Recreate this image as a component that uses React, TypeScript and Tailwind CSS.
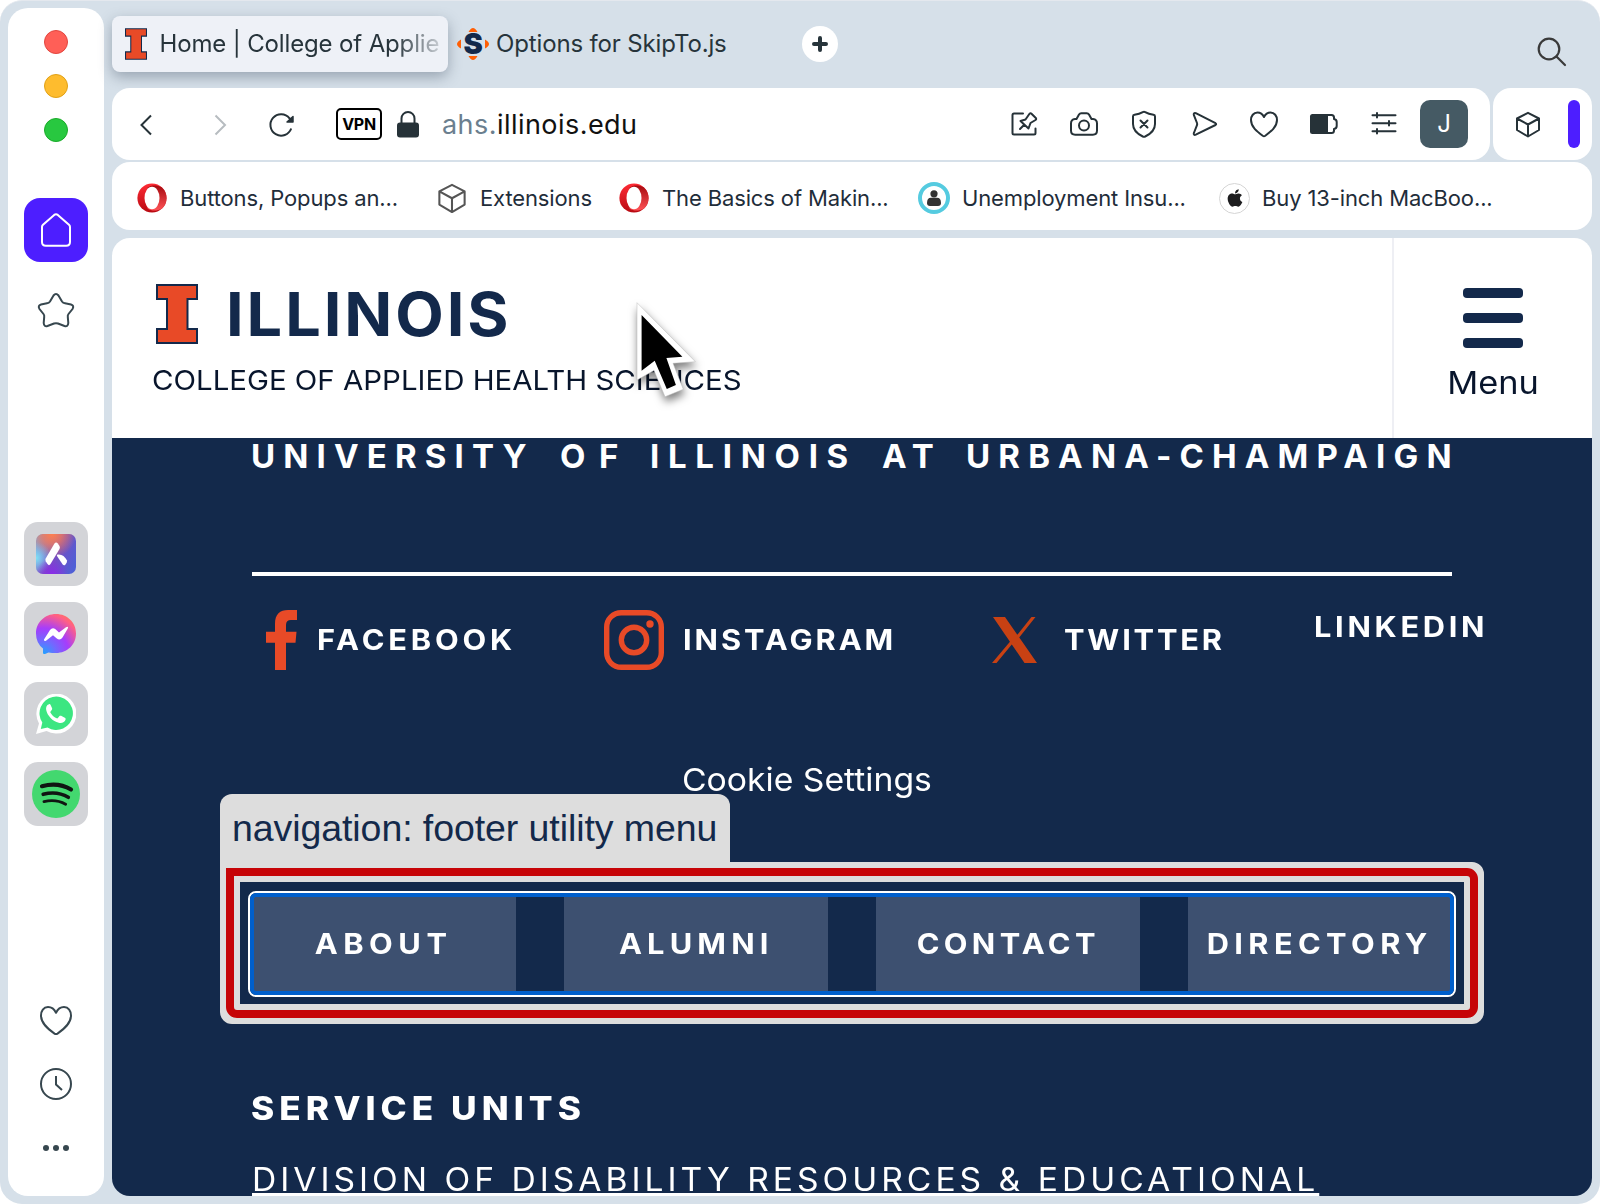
import type { ReactNode } from "react";
import { FaApple } from "react-icons/fa";

function BlockI({ className }: { className: string }) {
  return (
    <svg viewBox="0 0 42 60" className={className}>
      <path d="M0 0H42V16H32.500V44H42V60H0V44H10V16H0Z" fill="#13294b" />
      <path d="M2 2H40V14H30.500V46H40V58H2V46H12V14H2Z" fill="#e84a27" />
    </svg>
  );
}

function OperaLogo() {
  return (
    <svg viewBox="0 0 30 30" className="size-[30px] shrink-0">
      <defs>
        <linearGradient id="operaOuter" x1="0" y1="0" x2="0" y2="1">
          <stop offset="0" stopColor="#ff2b35" />
          <stop offset="1" stopColor="#b80a12" />
        </linearGradient>
        <linearGradient id="operaInner" x1="0" y1="0" x2="0" y2="1">
          <stop offset="0" stopColor="#a50a0f" />
          <stop offset="1" stopColor="#ff5357" />
        </linearGradient>
      </defs>
      <circle cx="15" cy="15" r="14.600" fill="url(#operaOuter)" />
      <path d="M10.500 4.500C15 1.500 20 2 24.700 4.200A14.600 14.600 0 0 1 24.700 25.800C20 28 15 28.500 10.500 25.500Z" fill="url(#operaInner)" />
      <ellipse cx="15" cy="15" rx="7.500" ry="11.300" fill="#fff" />
    </svg>
  );
}

const cube = "M16 4.800 27 10.500V22L16 28.500 5 22V10.500ZM5 10.500 16 16.500 27 10.500M16 16.500V28.500";

function Glyph({ children, className = "" }: { children: ReactNode; className?: string }) {
  return (
    <svg viewBox="0 0 32 32" fill="none" stroke="#263238" strokeWidth="2" strokeLinecap="round" strokeLinejoin="round" className={`size-8 shrink-0 ${className}`}>
      {children}
    </svg>
  );
}

function AppTile({ children }: { children: ReactNode }) {
  return <div className="flex size-16 items-center justify-center rounded-[14px] bg-[#d3d4d8]">{children}</div>;
}

function Sidebar() {
  return (
    <aside className="flex h-[1188px] w-24 shrink-0 flex-col items-center rounded-[20px] bg-white">
      <div className="mt-[22px] flex flex-col gap-5">
        <i className="size-6 rounded-full border border-[#e2463f] bg-[#ff5f57]" />
        <i className="size-6 rounded-full border border-[#e1a116] bg-[#febc2e]" />
        <i className="size-6 rounded-full border border-[#1aab29] bg-[#28c840]" />
      </div>
      <div className="mt-14 flex size-16 items-center justify-center rounded-2xl bg-[#4d1eff]">
        <svg viewBox="0 0 36 36" className="size-9" fill="none" stroke="#fff" strokeWidth="2" strokeLinejoin="round">
          <path d="M16.200 2.900Q18 1.500 19.800 2.900L31 12.700Q32 13.600 32 15V30Q32 33.800 28.200 33.800H7.800Q4 33.800 4 30V15Q4 13.600 5 12.700Z" />
        </svg>
      </div>
      <svg viewBox="0 0 40 40" className="mt-[29px] size-10" fill="none" stroke="#37474f" strokeWidth="2">
        <path d="M17.500 4.500Q20 1.500 22.500 4.500L26 10.500Q27 12 29 12.300L35 13.500Q38.500 14.500 36.500 18L32.500 23Q31.500 24.300 31.800 26L32.300 32Q32 36 28.500 35L22 32.500Q20 31.800 18 32.500L11.500 35Q8 36 7.700 32L8.200 26Q8.500 24.300 7.500 23L3.500 18Q1.500 14.500 5 13.500L11 12.300Q13 12 14 10.500Z" />
      </svg>
      <div className="mt-[191px] flex flex-col gap-4">
        <AppTile>
          <svg viewBox="0 0 40 40" className="size-10">
            <defs>
              <linearGradient id="ariaBase" x1="0" y1="0.300" x2="1" y2="0.700">
                <stop offset="0" stopColor="#7fa6dc" />
                <stop offset="0.450" stopColor="#7a4cc0" />
                <stop offset="1" stopColor="#4f5fd6" />
              </linearGradient>
              <radialGradient id="ariaOrange" cx="0.400" cy="0" r="0.600">
                <stop offset="0" stopColor="#ff7f4d" />
                <stop offset="0.400" stopColor="#f07a5c" stopOpacity="0.800" />
                <stop offset="1" stopColor="#f07a5c" stopOpacity="0" />
              </radialGradient>
              <radialGradient id="ariaCyan" cx="0" cy="0.600" r="0.400">
                <stop offset="0" stopColor="#7fe3f5" />
                <stop offset="1" stopColor="#7fc3f5" stopOpacity="0" />
              </radialGradient>
              <radialGradient id="ariaPurple" cx="0.400" cy="1" r="0.400">
                <stop offset="0" stopColor="#8a2be8" />
                <stop offset="1" stopColor="#8a2be8" stopOpacity="0" />
              </radialGradient>
            </defs>
            <rect width="40" height="40" rx="7" fill="url(#ariaBase)" />
            <rect width="40" height="40" rx="7" fill="url(#ariaOrange)" />
            <rect width="40" height="40" rx="7" fill="url(#ariaCyan)" />
            <rect width="40" height="40" rx="7" fill="url(#ariaPurple)" />
            <path d="M18.300 9.800Q20 7.500 21.800 9.500L23.500 12Q24.300 13.500 23.500 15L14.500 30Q13 32.300 11.500 30L9.700 27.200Q9 26 9.700 24.600Z" fill="#fff" />
            <path d="M21.500 20.500Q27.500 19.500 31 26.500Q31.500 28 29.500 30.500Q28 32.300 26.500 30.300L21 22Q20.500 21 21.500 20.500Z" fill="#fff" />
          </svg>
        </AppTile>
        <AppTile>
          <svg viewBox="0 0 40 40" className="size-10">
            <defs>
              <radialGradient id="messenger" cx="0.180" cy="1" r="1.080">
                <stop offset="0" stopColor="#1fa4ff" />
                <stop offset="0.300" stopColor="#6f6bff" />
                <stop offset="0.600" stopColor="#a63dfb" />
                <stop offset="0.930" stopColor="#ff5f86" />
                <stop offset="1" stopColor="#ff6a70" />
              </radialGradient>
            </defs>
            <path d="M20 0C31.300 0 40 8.500 40 19.500S31.300 39 20 39Q16 39 12.500 38.500L9 40Q7 40.500 7 38.500V34.500Q0 29 0 19.500C0 8.500 8.700 0 20 0Z" fill="url(#messenger)" />
            <path d="M8 25.500 14 16Q16.500 13 19.500 15.300L23 18.500 30 13.300Q33 11.800 31.800 14.500L26.500 23.500Q24 27 20.500 24.300L17 21.300 10 26.800Q7.500 27.500 8 25.500Z" fill="#fff" />
          </svg>
        </AppTile>
        <AppTile>
          <svg viewBox="0 0 40 40" className="size-10">
            <path d="M0 40 3 29.500A20 20 0 1 1 10.500 37Z" fill="#fff" />
            <path d="M4.800 35 6.300 28.500A16.700 16.700 0 1 1 11.500 33.500Z" fill="#3ce681" />
            <path d="M13 10.200c-2.500.6-3.300 3.200-2.800 5.800 1 5.500 6.500 11.500 12.500 12.800 3.200.7 6.300-.6 6.900-3.200.2-1-.1-1.500-.8-1.900l-3.700-1.900c-.7-.3-1.200-.2-1.600.3l-1.600 2c-.4.4-.8.400-1.300.2-2.700-1.200-4.800-3.100-6.200-5.700-.2-.5-.1-.9.2-1.200l1.300-1.700c.3-.5.4-.9.2-1.400l-1.600-3.600c-.3-.6-.8-.7-1.500-.5z" fill="#fff" />
          </svg>
        </AppTile>
        <AppTile>
          <svg viewBox="0 0 48 48" className="size-12" fill="none" stroke="#101512" strokeLinecap="round">
            <circle cx="24" cy="24" r="24" fill="#43d86f" stroke="none" />
            <path d="M10 16.200Q26.500 12 39 19.500" strokeWidth="4.200" />
            <path d="M11.200 24.300Q25 20.500 36.300 27.300" strokeWidth="3.600" />
            <path d="M12 31.600Q24 28.800 33.600 34.200" strokeWidth="2.900" />
          </svg>
        </AppTile>
      </div>
      <svg viewBox="0 0 36 36" className="mt-[177px] size-9" fill="none" stroke="#37474f" strokeWidth="2" strokeLinejoin="round">
        <path d="M18 9.800C16 5.500 13 4 10 4 5.500 4 3 8 3 12.500 3 20.500 10 26 16.500 30.600Q18 31.600 19.500 30.600C26 26 33 20.500 33 12.500 33 8 30.500 4 26 4 23 4 20 5.500 18 9.800Z" />
      </svg>
      <svg viewBox="0 0 36 36" className="mt-[27px] size-9" fill="none" stroke="#37474f" strokeWidth="2">
        <circle cx="18" cy="18" r="15" />
        <path d="M18 10V18.500L24 24" />
      </svg>
      <div className="mt-[43px] flex gap-1">
        <i className="size-1.5 rounded-full bg-[#37474f]" />
        <i className="size-1.5 rounded-full bg-[#37474f]" />
        <i className="size-1.5 rounded-full bg-[#37474f]" />
      </div>
    </aside>
  );
}

function TabStrip() {
  return (
    <div className="flex h-20 items-start pt-2 text-2xl tracking-[-0.145px] text-[#27343b]">
      <div className="flex h-14 w-[336px] items-center rounded-lg bg-[#eef1f7] pl-[13px] shadow-[0_5px_14px_rgba(60,75,95,0.4)]">
        <BlockI className="h-8 w-[22px] shrink-0" />
        <span className="ml-[12.500px] w-[286px] overflow-hidden whitespace-nowrap [mask-image:linear-gradient(to_right,black_235px,transparent_290px)]">Home | College of Applie</span>
      </div>
      <div className="flex h-14 items-center pl-[9px]">
        <span className="relative flex size-8 items-center justify-center">
          <svg viewBox="0 0 32 32" className="absolute inset-0 size-8" fill="#ff5f05">
            <path d="M11.500 4Q16-4 20.500 4ZM11.500 28Q16 36 20.500 28ZM4 11.500Q-4 16 4 20.500ZM28 11.500Q36 16 28 20.500Z" />
          </svg>
          <b className="relative text-[29px] leading-8 font-black text-[#13294b]">S</b>
        </span>
        <span className="ml-[7px] w-[306px] whitespace-nowrap">Options for SkipTo.js</span>
        <span className="flex size-9 items-center justify-center rounded-full bg-white">
          <svg viewBox="0 0 16 16" className="size-4" stroke="#27343b" strokeWidth="4" strokeLinecap="round">
            <path d="M8 2V14M2 8H14" />
          </svg>
        </span>
      </div>
      <svg viewBox="0 0 32 32" className="mt-5 mr-6 ml-auto size-8" fill="none" stroke="#3a3a3a" strokeWidth="2.200" strokeLinecap="round">
        <circle cx="13" cy="13" r="10.300" />
        <path d="M20.500 20.500 29 29" />
      </svg>
    </div>
  );
}

function Toolbar() {
  return (
    <div className="flex h-[72px] gap-[3px]">
      <div className="flex w-[1378px] items-center rounded-[18px] bg-white">
        <Glyph className="ml-[17.500px]">
          <path d="M21 7.500 11.500 17 21 26.500" strokeLinecap="butt" strokeLinejoin="miter" />
        </Glyph>
        <Glyph className="ml-[42.500px]">
          <path d="M11.500 7.500 21 17 11.500 26.500" stroke="#b7bcc0" strokeLinecap="butt" strokeLinejoin="miter" />
        </Glyph>
        <Glyph className="ml-[30px]">
          <path d="M25.200 20.500A10.700 10.700 0 1 1 23.500 10.300L26 12.500" strokeLinecap="butt" />
          <path d="M27 8.500V14H21Z" fill="#263238" strokeWidth="1.500" />
        </Glyph>
        <span className="ml-[38px] flex h-8 w-[46px] items-center justify-center rounded-[5px] border-2 border-black text-[16px] font-bold tracking-[-0.3px] text-black">VPN</span>
        <svg viewBox="0 0 22 28" className="ml-[15px] h-7 w-[22px]" fill="none">
          <path d="M4.500 13V8.500A6.500 6.500 0 0 1 17.500 8.500V13" stroke="#263238" strokeWidth="2" />
          <rect y="12.500" width="22" height="15" rx="3" fill="#263238" />
        </svg>
        <span className="mt-0.5 ml-[23px] text-[27px] tracking-[0.450px] text-[#111]">
          <span className="text-[#6b7f8f]">ahs.</span>illinois.edu
        </span>
        <div className="mr-[16px] ml-auto flex [&>*]:mx-3.5">
          <Glyph>
            <path d="M15 5.500H6Q4.500 5.500 4.500 7V25Q4.500 26.500 6 26.500H26Q27.500 26.500 27.500 25V20.500" />
            <path d="M12.500 13 17.500 11.500 21.500 5.800Q22.500 4.700 23.500 5.700L27.800 10Q28.700 11 27.500 12L22.500 15 20.500 20.500ZM16.200 16.700 12 21" />
          </Glyph>
          <Glyph>
            <path d="M8.500 11 11 6.500Q11.800 5.200 13.300 5.200H18.700Q20.200 5.200 21 6.500L23.500 11H25Q29 11.500 29 15.500V22.500Q29 26.700 24.800 26.700H7.200Q3 26.700 3 22.500V15.500Q3 11.500 7 11Z" />
            <circle cx="16" cy="17.500" r="5" />
          </Glyph>
          <Glyph>
            <path d="M14.800 4.200Q16 3.500 17.200 4.200 20.500 6.200 25.500 6.800 27 7 27 8.500V16C27 22 23.500 25.500 17.200 28.500Q16 29 14.800 28.500C8.500 25.500 5 22 5 16V8.500Q5 7 6.500 6.800 11.500 6.200 14.800 4.200Z" />
            <path d="M12.500 12.500 19.500 19.500M19.500 12.500 12.500 19.500" />
          </Glyph>
          <Glyph className="translate-x-px">
            <path d="M6.800 5.200C5.200 4.600 4.300 5.800 4.900 7.200L8 15Q8.400 16 8 17.200L4.900 25C4.300 26.400 5.200 27.400 6.800 26.700L26.500 17Q27.800 16.100 26.500 15.200Z" />
          </Glyph>
          <Glyph>
            <path d="M16 9C14.500 6 12 4.500 9.500 4.500 5.500 4.500 3 8 3 12 3 19 9 23.500 14.700 27.700Q16 28.600 17.300 27.700C23 23.500 29 19 29 12 29 8 26.500 4.500 22.500 4.500 20 4.500 17.500 6 16 9Z" />
          </Glyph>
          <Glyph>
            <path d="M4.500 6H20V26H4.500Q2 26 2 23.500V8.500Q2 6 4.500 6Z" fill="#263238" stroke="none" />
            <path d="M20 7H23.500Q26 7 26 9.500V11Q28.700 11.500 28.700 14V18Q28.700 20.500 26 21V22.500Q26 25 23.500 25H20" />
          </Glyph>
          <Glyph>
            <path d="M4.500 7.200H27.500M4.500 15.300H27.500M4.500 23.200H27.500M9 5V9.400M21 13.100V17.500M9 21V25.400" />
          </Glyph>
          <span className="!mx-1.5 -my-2 flex size-12 items-center justify-center rounded-[10px] bg-[#455a64] text-2xl text-white">J</span>
        </div>
      </div>
      <div className="flex w-[99px] items-center rounded-[18px] bg-white pl-[19px]">
        <Glyph>
          <path d={cube} />
        </Glyph>
        <span className="ml-6 h-12 w-3 rounded-full bg-[#4d1eff]" />
      </div>
    </div>
  );
}

function Bookmark({ icon, label, className }: { icon: ReactNode; label: string; className: string }) {
  return (
    <div className={`flex items-center whitespace-nowrap ${className}`}>
      {icon}
      <span>{label}</span>
    </div>
  );
}

function Bookmarks() {
  return (
    <div className="mt-0.5 flex h-[68px] items-center rounded-[18px] bg-white pt-1 pl-[25px] text-[22px] tracking-[-0.130px] text-[#1f2d3a]">
      <Bookmark icon={<OperaLogo />} label="Buttons, Popups an..." className="w-[300px] gap-[13px]" />
      <Bookmark
        icon={
          <svg viewBox="3 3.200 26 27" className="h-[31px] w-[30px]" fill="none" stroke="#555" strokeWidth="1.800" strokeLinejoin="round">
            <path d={cube} />
          </svg>
        }
        label="Extensions"
        className="w-[182px] gap-[13px]"
      />
      <Bookmark icon={<OperaLogo />} label="The Basics of Makin..." className="w-[299px] gap-[13px]" />
      <Bookmark
        icon={
          <svg viewBox="0 0 32 32" className="size-8">
            <circle cx="16" cy="16" r="14" fill="#fff" stroke="#55cbe0" strokeWidth="4" />
            <circle cx="16" cy="11.800" r="3.600" fill="#333" />
            <path d="M9 21Q9 15.800 13 15.800H19Q23 15.800 23 21 23 24 20 24H12Q9 24 9 21Z" fill="#333" />
          </svg>
        }
        label="Unemployment Insu..."
        className="w-[301px] gap-3"
      />
      <Bookmark
        icon={
          <span className="flex size-[31px] items-center justify-center rounded-full border border-[#d5d5d5] bg-white">
            <FaApple className="-mt-px size-[20px] text-[#1d1d1f]" />
          </span>
        }
        label="Buy 13-inch MacBoo..."
        className="gap-3"
      />
    </div>
  );
}

function SiteHeader() {
  return (
    <header className="relative flex h-[200px] bg-white">
      <div className="flex-1 pt-[46px] pl-[39.500px]">
        <div className="flex h-[60px] items-center">
          <BlockI className="ml-1 h-[60px] w-[42px]" />
          <span className="ml-7 origin-left scale-x-105 text-[60px] leading-[60px] font-bold tracking-[2.770px] text-[#13294b]">ILLINOIS</span>
        </div>
        <div className="mt-5 w-fit origin-left scale-x-107 text-[27.500px] leading-8 whitespace-nowrap text-[#08152c]">COLLEGE OF APPLIED HEALTH SCIENCES</div>
      </div>
      <div className="flex w-[200px] flex-col items-center border-l-2 border-[#eeeff4] pt-[50px]">
        <div className="flex flex-col gap-[15.500px]">
          <i className="h-[9.500px] w-[60px] rounded-[4px] bg-[#13294b]" />
          <i className="h-[9.500px] w-[60px] rounded-[4px] bg-[#13294b]" />
          <i className="h-[9.500px] w-[60px] rounded-[4px] bg-[#13294b]" />
        </div>
        <span className="mt-[15px] scale-x-109 text-[31.500px] leading-10 text-[#08152c]">Menu</span>
      </div>
      <svg viewBox="0 0 80 110" className="absolute top-[52px] left-[515px] h-[110px] w-20 overflow-visible drop-shadow-[1px_5px_4px_rgba(0,0,0,0.5)]">
        <path d="M10 12.700 68.400 71.700 46 73.300 56.300 99.300 38 106.700 27 80.500 10 90Z" fill="#fff" stroke="#bbb" strokeWidth="0.500" />
        <path d="M14.600 25 55.400 66.700 39.400 68 48.900 95 39.800 99 27.700 70.700 14.600 80.700Z" fill="#000" />
      </svg>
    </header>
  );
}

const links = [
  { label: "ABOUT", tracking: "tracking-[5px]" },
  { label: "ALUMNI", tracking: "tracking-[4.660px]" },
  { label: "CONTACT", tracking: "tracking-[3.930px]" },
  { label: "DIRECTORY", tracking: "tracking-[4.870px]" },
];

function SiteFooter() {
  return (
    <footer className="h-[758px] bg-[#13294b] pl-[140px] text-white">
      <div className="grid h-9 w-[1200px] grid-cols-[309px_91px_230px_86px_484px] text-[33px] leading-9 font-bold tracking-[8.150px] whitespace-nowrap">
        <span className="-ml-px">UNIVERSITY</span>
        <span className="-ml-px tracking-[13.500px]">OF</span>
        <span className="-ml-0.5 tracking-[8.700px]">ILLINOIS</span>
        <span>AT</span>
        <span className="-ml-0.5">URBANA-CHAMPAIGN</span>
      </div>
      <div className="mt-[98px] h-1 w-[1200px] bg-white" />
      <div className="mt-[34px] grid h-[60px] w-[1240px] grid-cols-[352px_388px_322px_178px] text-[28px] leading-[60px] font-bold">
        <div className="flex items-center pl-[14px]">
          <svg viewBox="0 0 32 60" className="h-[60px] w-8" fill="#e84a27">
            <path d="M9 60V32.700H0V21.700H9V14C9 4 14 0 22 0H31V10H25Q20 10 20 15V21.700H30.500L29.500 32.700H20V60Z" />
          </svg>
          <span className="ml-[19px] origin-left scale-x-110 tracking-[3.480px]">FACEBOOK</span>
        </div>
        <div className="flex items-center">
          <svg viewBox="0 0 60 60" className="size-[60px]" fill="none" stroke="#e84a27" strokeWidth="5.400">
            <rect x="2.700" y="2.700" width="54.600" height="54.600" rx="14.500" />
            <circle cx="30" cy="30" r="12.700" />
            <circle cx="46" cy="14" r="3.700" fill="#e84a27" stroke="none" />
          </svg>
          <span className="ml-[19px] origin-left scale-x-110 tracking-[2.660px]">INSTAGRAM</span>
        </div>
        <div className="flex items-center">
          <svg viewBox="0 0 45 46" className="h-[46px] w-[45px]" fill="#c84113">
            <path d="M1 0H13L45 46H32.500ZM39.500 0H43.500L26 22 24 19.500ZM0 46 19 23.500 21 26 4.500 46Z" />
          </svg>
          <span className="ml-[27px] origin-left scale-x-110 tracking-[2.550px]">TWITTER</span>
        </div>
        <span className="-mt-[13px] w-fit origin-left scale-x-110 tracking-[3.350px]">LINKEDIN</span>
      </div>
      <div className="mt-[90px] ml-[430px] w-fit origin-left scale-x-107 text-[31.500px] leading-10">Cookie Settings</div>
      <nav className="relative mt-[95px] flex h-[98px] w-[1200px] gap-12">
        {links.map((link) => (
          <a key={link.label} className={`flex w-[264px] items-center justify-center bg-[#3d5070] text-[28px] leading-8 font-bold ${link.tracking}`}>
            <span className="scale-x-110">{link.label}</span>
          </a>
        ))}
        <div className="absolute -inset-1 rounded-lg border-2 border-white">
          <div className="size-full rounded-md border-4 border-[#005fcc]" />
        </div>
        <div className="absolute -top-[33px] -right-8 -bottom-[31px] -left-8 rounded-xl rounded-tl-none border-20 border-[#ddd]">
          <div className="absolute -inset-3.5 rounded-[11px] rounded-tl-none border-8 border-[#c60407]" />
        </div>
        <div className="absolute -top-[101px] -left-8 h-[69px] w-[510px] rounded-t-xl bg-[#ddd] pt-[14px] pl-[12px] font-['Liberation_Sans',sans-serif] text-[37.500px] leading-10 tracking-[-0.080px] whitespace-nowrap text-[#13294b]">
          navigation: footer utility menu
        </div>
      </nav>
      <h2 className="mt-24 -ml-px w-fit origin-left scale-x-110 text-[32px] leading-10 font-extrabold tracking-[4.580px]">SERVICE UNITS</h2>
      <a className="mt-[31px] block w-fit origin-left scale-x-105 text-[32px] leading-10 tracking-[3.810px] whitespace-nowrap underline decoration-4 underline-offset-2 [text-decoration-skip-ink:none]">
        DIVISION OF DISABILITY RESOURCES &amp; EDUCATIONAL
      </a>
    </footer>
  );
}

export default function App() {
  return (
    <div className="h-[1204px] w-[1600px] overflow-hidden bg-white font-['Inter',sans-serif]">
      <div className="flex h-full gap-2 overflow-hidden rounded-[22px] border-t border-[#e4e8ee] bg-[#d6e0e9] px-2 pt-[7px]">
        <Sidebar />
        <main className="flex w-[1480px] flex-col">
          <TabStrip />
          <Toolbar />
          <Bookmarks />
          <div className="mt-2 h-[958px] overflow-hidden rounded-[18px]">
            <SiteHeader />
            <SiteFooter />
          </div>
        </main>
      </div>
    </div>
  );
}
